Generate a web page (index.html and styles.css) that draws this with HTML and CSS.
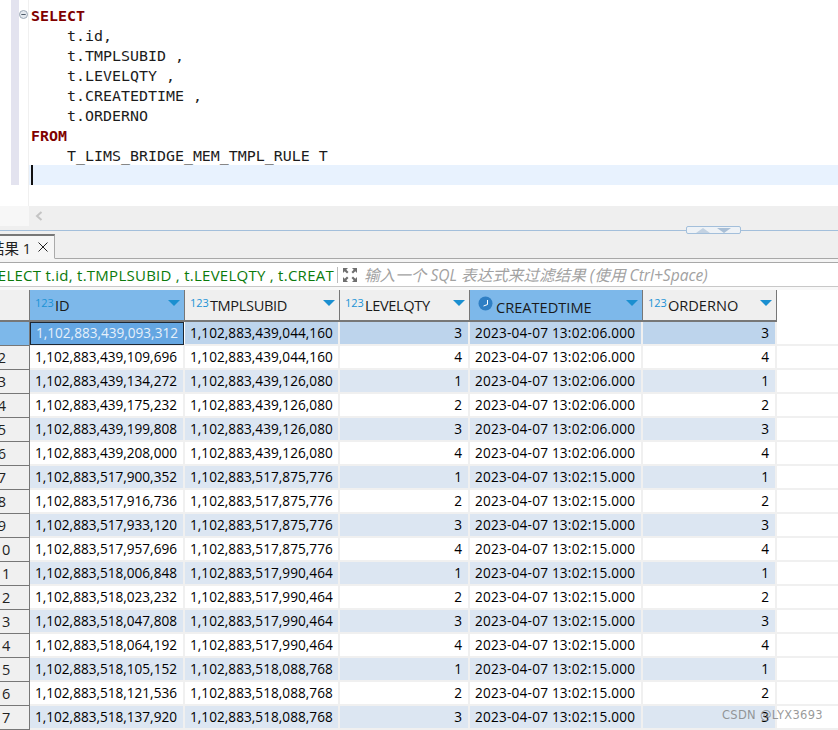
FILE: index.html
```html
<!DOCTYPE html>
<html lang="zh">
<head>
<meta charset="utf-8">
<title>SQL</title>
<link rel="stylesheet" href="styles.css">
</head>
<body>
<section class="editor">
  <div class="margin"><div class="ruler"></div></div>
  <div class="fold"><svg class="fold-icon" width="9" height="9" viewBox="0 0 9 9"><circle cx="4.500" cy="4.500" r="4" fill="#e4e9ef" stroke="#9aa7b5"/><path d="M2.300 4.500h4.400" stroke="#4d5a68"/></svg></div>
  <div class="code">
    <div class="line kw">SELECT</div>
    <div class="line">    t.id,</div>
    <div class="line">    t.TMPLSUBID ,</div>
    <div class="line">    t.LEVELQTY ,</div>
    <div class="line">    t.CREATEDTIME ,</div>
    <div class="line">    t.ORDERNO</div>
    <div class="line kw">FROM</div>
    <div class="line">    T_LIMS_BRIDGE_MEM_TMPL_RULE T</div>
    <div class="line current"><span class="caret"></span></div>
  </div>
</section>
<div class="hscroll">
  <div class="hscroll-corner"></div>
  <svg class="chev" width="8" height="10" viewBox="0 0 8 10"><path d="M6.500 1 2 5l4.500 4" fill="none" stroke="#c4c4c4" stroke-width="2"/></svg>
</div>
<div class="sash">
  <div class="sash-line"></div>
  <div class="sash-btn">
    <svg width="14" height="5" viewBox="0 0 14 5"><path d="M7 0l7 5H0z" fill="#c3d2e2"/></svg>
    <svg width="14" height="5" viewBox="0 0 14 5"><path d="M7 5 14 0H0z" fill="#a9bfd6"/></svg>
  </div>
  <div class="sash-end"></div>
</div>
<div class="tabbar">
  <div class="tab"><span class="tab-label">结果 1</span><svg class="tab-x" width="10" height="10" viewBox="0 0 10 10"><path d="M.5.500l9 9M9.500.500l-9 9" stroke="#222" fill="none"/></svg></div>
</div>
<div class="filter">
  <div class="query"><span class="query-text">SELECT t.id, t.TMPLSUBID , t.LEVELQTY , t.CREAT</span></div>
  <div class="filter-sep"></div>
  <svg class="expand" width="16" height="16" viewBox="0 0 16 16"><path d="M1 6V1h5L4.300 2.700 6.500 5 5 6.500 2.700 4.200zM15 6V1h-5l1.700 1.700L9.500 5 11 6.500l2.300-2.300zM1 10v5h5l-1.700-1.700 2.200-2.300L5 9.500l-2.300 2.300zM15 10v5h-5l1.700-1.700L9.500 11l1.500-1.500 2.300 2.300z" fill="#6f6f6f"/></svg>
  <span class="placeholder">输入一个 SQL 表达式来过滤结果 (使用 Ctrl+Space)</span>
</div>
<div class="spacer"></div>
<section class="grid">
  <div class="row head">
    <div class="rh"></div>
    <div class="hc active"><sup class="t">123</sup><span class="hn">ID</span><svg class="sort" width="12" height="6" viewBox="0 0 12 6"><path d="M0 0h12L6 6z" fill="#1b8fd0"/></svg></div>
    <div class="hc"><sup class="t">123</sup><span class="hn narrow">TMPLSUBID</span><svg class="sort" width="12" height="6" viewBox="0 0 12 6"><path d="M0 0h12L6 6z" fill="#1b8fd0"/></svg></div>
    <div class="hc"><sup class="t">123</sup><span class="hn narrow">LEVELQTY</span><svg class="sort" width="12" height="6" viewBox="0 0 12 6"><path d="M0 0h12L6 6z" fill="#1b8fd0"/></svg></div>
    <div class="hc active clockcol"><svg class="clock" width="15" height="15" viewBox="0 0 15 15"><circle cx="7.500" cy="7.500" r="7" fill="#2f7fc4"/><path d="M9.500 4v4.500L5.500 10" fill="none" stroke="#fff"/></svg><span class="hn">CREATEDTIME</span><svg class="sort" width="12" height="6" viewBox="0 0 12 6"><path d="M0 0h12L6 6z" fill="#1b8fd0"/></svg></div>
    <div class="hc"><sup class="t">123</sup><span class="hn">ORDERNO</span><svg class="sort" width="12" height="6" viewBox="0 0 12 6"><path d="M0 0h12L6 6z" fill="#1b8fd0"/></svg></div>
  </div>
  <div class="row sel"><div class="rh"><span>1</span></div><div class="c focus">1,102,883,439,093,312</div><div class="c">1,102,883,439,044,160</div><div class="c r">3</div><div class="c">2023-04-07 13:02:06.000</div><div class="c r">3</div></div>
  <div class="row"><div class="rh"><span>2</span></div><div class="c">1,102,883,439,109,696</div><div class="c">1,102,883,439,044,160</div><div class="c r">4</div><div class="c">2023-04-07 13:02:06.000</div><div class="c r">4</div></div>
  <div class="row alt"><div class="rh"><span>3</span></div><div class="c">1,102,883,439,134,272</div><div class="c">1,102,883,439,126,080</div><div class="c r">1</div><div class="c">2023-04-07 13:02:06.000</div><div class="c r">1</div></div>
  <div class="row"><div class="rh"><span>4</span></div><div class="c">1,102,883,439,175,232</div><div class="c">1,102,883,439,126,080</div><div class="c r">2</div><div class="c">2023-04-07 13:02:06.000</div><div class="c r">2</div></div>
  <div class="row alt"><div class="rh"><span>5</span></div><div class="c">1,102,883,439,199,808</div><div class="c">1,102,883,439,126,080</div><div class="c r">3</div><div class="c">2023-04-07 13:02:06.000</div><div class="c r">3</div></div>
  <div class="row"><div class="rh"><span>6</span></div><div class="c">1,102,883,439,208,000</div><div class="c">1,102,883,439,126,080</div><div class="c r">4</div><div class="c">2023-04-07 13:02:06.000</div><div class="c r">4</div></div>
  <div class="row alt"><div class="rh"><span>7</span></div><div class="c">1,102,883,517,900,352</div><div class="c">1,102,883,517,875,776</div><div class="c r">1</div><div class="c">2023-04-07 13:02:15.000</div><div class="c r">1</div></div>
  <div class="row"><div class="rh"><span>8</span></div><div class="c">1,102,883,517,916,736</div><div class="c">1,102,883,517,875,776</div><div class="c r">2</div><div class="c">2023-04-07 13:02:15.000</div><div class="c r">2</div></div>
  <div class="row alt"><div class="rh"><span>9</span></div><div class="c">1,102,883,517,933,120</div><div class="c">1,102,883,517,875,776</div><div class="c r">3</div><div class="c">2023-04-07 13:02:15.000</div><div class="c r">3</div></div>
  <div class="row"><div class="rh"><span>10</span></div><div class="c">1,102,883,517,957,696</div><div class="c">1,102,883,517,875,776</div><div class="c r">4</div><div class="c">2023-04-07 13:02:15.000</div><div class="c r">4</div></div>
  <div class="row alt"><div class="rh"><span>11</span></div><div class="c">1,102,883,518,006,848</div><div class="c">1,102,883,517,990,464</div><div class="c r">1</div><div class="c">2023-04-07 13:02:15.000</div><div class="c r">1</div></div>
  <div class="row"><div class="rh"><span>12</span></div><div class="c">1,102,883,518,023,232</div><div class="c">1,102,883,517,990,464</div><div class="c r">2</div><div class="c">2023-04-07 13:02:15.000</div><div class="c r">2</div></div>
  <div class="row alt"><div class="rh"><span>13</span></div><div class="c">1,102,883,518,047,808</div><div class="c">1,102,883,517,990,464</div><div class="c r">3</div><div class="c">2023-04-07 13:02:15.000</div><div class="c r">3</div></div>
  <div class="row"><div class="rh"><span>14</span></div><div class="c">1,102,883,518,064,192</div><div class="c">1,102,883,517,990,464</div><div class="c r">4</div><div class="c">2023-04-07 13:02:15.000</div><div class="c r">4</div></div>
  <div class="row alt"><div class="rh"><span>15</span></div><div class="c">1,102,883,518,105,152</div><div class="c">1,102,883,518,088,768</div><div class="c r">1</div><div class="c">2023-04-07 13:02:15.000</div><div class="c r">1</div></div>
  <div class="row"><div class="rh"><span>16</span></div><div class="c">1,102,883,518,121,536</div><div class="c">1,102,883,518,088,768</div><div class="c r">2</div><div class="c">2023-04-07 13:02:15.000</div><div class="c r">2</div></div>
  <div class="row alt"><div class="rh"><span>17</span></div><div class="c">1,102,883,518,137,920</div><div class="c">1,102,883,518,088,768</div><div class="c r">3</div><div class="c">2023-04-07 13:02:15.000</div><div class="c r">3</div></div>
</section>
<div class="watermark">CSDN @LYX3693</div>
</body>
</html>
```
FILE: styles.css
```css
* { box-sizing: border-box; }
html, body { margin: 0; padding: 0; height: 730px; overflow: hidden; background: #fff; }
body { font-family: "Open Sans", "Noto Sans CJK SC", sans-serif; font-size: 13.6px; color: #000; }

.editor { display: flex; height: 206px; background: #fff; }
.margin { width: 19px; padding-left: 11px; }
.ruler { width: 8px; height: 185px; background: #e3e3ef; }
.fold { width: 10px; border-right: 1px solid #f0f0f0; padding-top: 10px; }
.fold-icon { display: block; }
.code { flex: 1; padding-top: 5px; font-family: "DejaVu Sans Mono", monospace; font-size: 14.95px; line-height: 22px; color: #1c1c1c; }
.line { height: 20px; padding-left: 2px; white-space: pre; }
.kw { font-weight: 700; color: #7f0000; }
.current { background: #e8f2fe; }
.caret { display: block; width: 2px; height: 20px; background: #111; }

.hscroll { display: flex; align-items: center; height: 20px; background: #efefef; }
.hscroll-corner { width: 29px; height: 20px; background: #f7f7f7; }
.chev { margin-left: 6px; }

.sash { display: flex; align-items: center; height: 8px; background: #efefef; }
.sash-line { width: 686px; height: 1px; background: #a3bfdb; }
.sash-btn { display: flex; align-items: center; justify-content: center; gap: 7px; width: 55px; height: 8px; background: #eef2f6; border: 1px solid #a3bfdb; border-radius: 2px; }
.sash-end { flex: 1; height: 1px; background: #a3bfdb; }

.tabbar { height: 28px; padding-bottom: 4px; background: linear-gradient(#efefef 24px, #a8a8a8 24px, #a8a8a8 25px, #f4f4f4 25px); }
.tab { display: flex; align-items: center; width: 56px; height: 25px; margin-left: -1px; background: #f6f6f6; border-top: 2px solid #777; border-right: 1px solid #aaa; border-bottom: 1px solid #f6f6f6; overflow: hidden; }
.tab-label { margin-left: -9px; flex: none; width: 48px; font-size: 14.5px; white-space: nowrap; color: #222; }
.tab-x { flex: none; }

.filter { display: flex; align-items: center; height: 25px; background: #fff; border-top: 1px solid #a8a8a8; border-bottom: 1px solid #c8c8c8; }
.query { width: 337px; overflow: hidden; white-space: nowrap; direction: rtl; padding-right: 3px; }
.query-text { direction: ltr; unicode-bidi: embed; color: #0b7a0b; font-size: 15px; letter-spacing: .26px; }
.filter-sep { width: 1px; height: 16px; background: #bbb; }
.expand { margin-left: 4px; flex: none; }
.placeholder { margin-left: 6px; color: #a2a2a2; font-style: italic; font-size: 15.6px; white-space: nowrap; }

.spacer { height: 3px; background: #f8f8f8; }

.grid { display: block; }
.row { display: grid; grid-template-columns: 30px 155px 155px 130px 173px 134px 1fr; height: 24px; border-bottom: 2px solid #f0f0f0; background: #fff; }
.row.head { height: 32px; border-bottom: 0; }
.rh { display: flex; justify-content: center; align-items: center; overflow: hidden; background: #f0f0f0; border-right: 1px solid #777; border-bottom: 1px solid #777; margin-bottom: -2px; padding-right: 25px; white-space: nowrap; color: #222; line-height: 22px; font-size: 14.5px; }
.rh span { flex: none; }
.row.sel .rh { background: #7db8ea; color: #7db8ea; }
.head .rh { margin-bottom: 0; border-bottom: 2px solid #777; }
.c { background: #fff; padding: 0 5px; line-height: 22px; white-space: nowrap; overflow: hidden; border-right: 2px solid #f0f0f0; }
.c:nth-child(3) { letter-spacing: .04px; }
.c:nth-child(5) { letter-spacing: .22px; }
.row.alt .c { background: #dce6f2; }
.row.sel .c { background: #bdd4ec; }
.r { text-align: right; padding-right: 6px; }
.row.sel .focus { background: #64a6e2; color: #e6f0fa; border: 1px solid #1d2733; margin: 0 1px -1px 0; line-height: 20px; padding-left: 5px; }

.hc { display: flex; align-items: flex-start; position: relative; background: #efefef; border-right: 1px solid #777; border-bottom: 2px solid #777; padding-left: 5px; font-size: 14.6px; }
.hc.active { background: #7db8ea; }
.t { flex: none; margin: 6px 1px 0 0; font-size: 11px; line-height: 13px; color: #1b93d6; vertical-align: baseline; }
.hn { margin-top: 4px; line-height: 22px; white-space: nowrap; color: #1a1a1a; }
.narrow { letter-spacing: -.35px; }
.clockcol .hn { margin-left: 3px; margin-top: 6px; }
.clock { flex: none; margin: 6px 0 0 3px; }
.sort { position: absolute; right: 4px; top: 10px; }

.watermark { position: absolute; left: 722px; top: 707px; font-family: "DejaVu Sans", sans-serif; font-size: 11.5px; line-height: 16px; letter-spacing: .3px; color: rgba(120,120,120,.75); white-space: nowrap; }
```
